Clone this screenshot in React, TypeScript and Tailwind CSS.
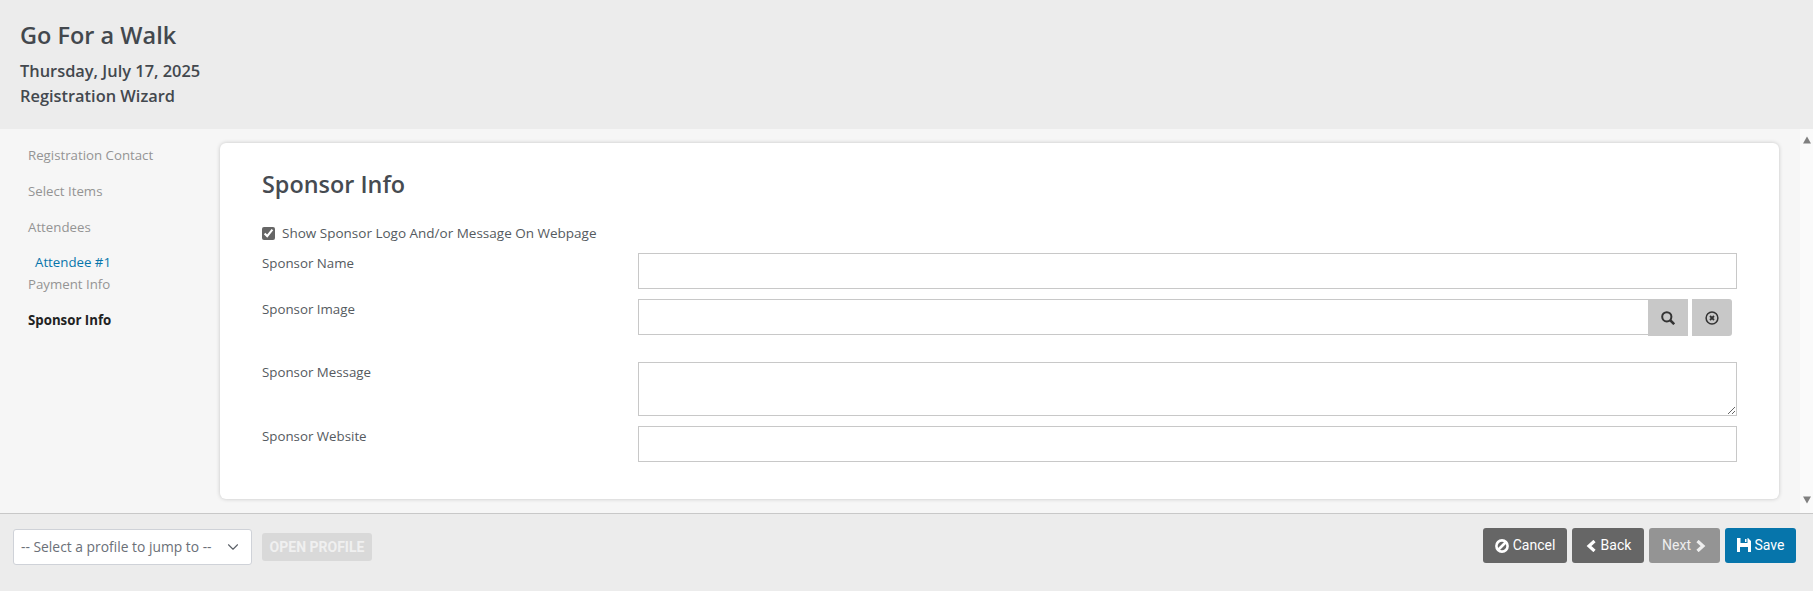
import React from 'react';
import { ChevronDown } from 'lucide-react';

const steps = [
  { label: 'Registration Contact', className: 'mt-[16px] text-[#949494]' },
  { label: 'Select Items', className: 'mt-[16px] text-[#949494]' },
  { label: 'Attendees', className: 'mt-[16px] text-[#949494]' },
  { label: 'Attendee #1', className: 'mt-[15px] ml-[7px] text-[#0675ab]' },
  { label: 'Payment Info', className: 'mt-[2px] text-[#949494]' },
  { label: 'Sponsor Info', className: 'mt-[16px] font-bold text-[#222222]' },
];

const inputClass = 'h-[36px] w-full border border-[#c8c8c8] bg-white outline-none';

const FormRow: React.FC<{ label: string; children: React.ReactNode }> = ({ label, children }) => (
  <div className="flex items-start">
    <label className="w-[376px] shrink-0 text-[13.3px] leading-[20px] text-[#555a60]">{label}</label>
    <div className="flex-1">{children}</div>
  </div>
);

const FooterButton: React.FC<{ className: string; children: React.ReactNode }> = ({ className, children }) => (
  <button className={`flex h-[35px] items-center justify-center rounded-[3px] text-[14px] ${className}`}>
    {children}
  </button>
);

// font-awesome 4 style glyphs, the icon packages only carry the newer cuts
const BanIcon = () => (
  <svg width="14" height="14" viewBox="0 0 14 14" fill="none" stroke="currentColor">
    <circle cx="7" cy="7" r="5.6" strokeWidth="2.6" />
    <path d="M11 3 3 11" strokeWidth="2.6" />
  </svg>
);

const ChevronLeftIcon = () => (
  <svg width="11" height="12" viewBox="0 0 11 12" fill="none" stroke="currentColor" strokeWidth="3.2">
    <path d="M9.5 1 4 6l5.5 5" />
  </svg>
);

const ChevronRightIcon = () => (
  <svg width="11" height="12" viewBox="0 0 11 12" fill="none" stroke="currentColor" strokeWidth="3.2">
    <path d="M1.5 1 7 6l-5.5 5" />
  </svg>
);

const SaveIcon = () => (
  <svg width="14" height="14" viewBox="0 0 14 14" fill="currentColor" className="-mt-[1px]">
    <path fillRule="evenodd" d="M0 0H11L14 3V14H0ZM3.5 0V5H10.5V0ZM8 1H9.5V4H8ZM3 9V14H11V9Z" />
  </svg>
);

const SearchIcon = () => (
  <svg width="14" height="14" viewBox="0 0 14 14" fill="none" stroke="currentColor">
    <circle cx="5.8" cy="5.8" r="4.6" strokeWidth="2" />
    <path d="M9 9 13.2 13.2" strokeWidth="2.5" />
  </svg>
);

const TimesCircleIcon = () => (
  <svg width="14" height="14" viewBox="0 0 14 14" fill="none" stroke="currentColor">
    <circle cx="7" cy="7" r="5.9" strokeWidth="1.5" />
    <path d="M5 5 9 9M9 5 5 9" strokeWidth="1.8" />
  </svg>
);

export default function App() {
  return (
    <div className="flex h-[591px] flex-col overflow-hidden bg-[#ececec] font-['Open_Sans',sans-serif]">
      {/* Header */}
      <div className="h-[129px] shrink-0 bg-[#ececec] pl-[20px] pt-[19px] text-[#43484e]">
        <h1 className="text-[23.5px] leading-[32px] font-semibold">Go For a Walk</h1>
        <div className="mt-[7px] text-[16.4px] leading-[25px] font-semibold">Thursday, July 17, 2025</div>
        <div className="text-[16.4px] leading-[25px] font-semibold">Registration Wizard</div>
      </div>

      {/* Main */}
      <div className="flex h-[384px] shrink-0 bg-[#f6f6f6]">
        <nav className="flex w-[220px] shrink-0 flex-col pl-[28px] text-[13.25px] leading-[20px]">
          {steps.map((step) => (
            <div key={step.label} className={step.className}>
              {step.label}
            </div>
          ))}
        </nav>

        <div className="mt-[14px] h-[356px] w-[1559px] shrink-0 rounded-[6px] bg-white px-[42px] pt-[25px] shadow-[0_0_4px_rgba(0,0,0,0.2)]">
          <h2 className="text-[23.4px] leading-[32px] font-semibold text-[#464b51]">Sponsor Info</h2>
          <label className="mt-[23px] flex h-[20px] items-center gap-[7px] text-[13.5px] text-[#555a60]">
            <input type="checkbox" defaultChecked className="m-0 h-[13px] w-[13px] accent-[#666666]" />
            Show Sponsor Logo And/or Message On Webpage
          </label>

          <div className="mt-[10px] flex flex-col">
            <FormRow label="Sponsor Name">
              <input className={inputClass} />
            </FormRow>
            <div className="mt-[10px]">
              <FormRow label="Sponsor Image">
                <div className="flex w-[1094px] items-start">
                  <input className="h-[36px] flex-1 border border-r-0 border-[#c8c8c8] bg-white outline-none" />
                  <button className="flex h-[37px] w-[40px] items-center justify-center bg-[#c8c8c8] text-[#333333]">
                    <SearchIcon />
                  </button>
                  <button className="ml-[4px] flex h-[37px] w-[40px] items-center justify-center rounded-r-[3px] bg-[#c8c8c8] text-[#333333]">
                    <TimesCircleIcon />
                  </button>
                </div>
              </FormRow>
            </div>
            <div className="mt-[26px]">
              <FormRow label="Sponsor Message">
                <textarea className="block h-[54px] w-full border border-[#c8c8c8] bg-white outline-none" />
              </FormRow>
            </div>
            <div className="mt-[10px]">
              <FormRow label="Sponsor Website">
                <input className={inputClass} />
              </FormRow>
            </div>
          </div>
        </div>

        {/* Scrollbar */}
        <div className="ml-[21px] flex w-[13px] shrink-0 flex-col items-center justify-between bg-[#fafafa] pb-[9px] pt-[7px]">
          <svg width="8" height="8" viewBox="0 0 8 8" fill="#808080"><path d="M4 0.5 8 7.5H0z" /></svg>
          <svg width="8" height="8" viewBox="0 0 8 8" fill="#808080"><path d="M4 7.5 0 0.5H8z" /></svg>
        </div>
      </div>

      {/* Footer */}
      <div className="flex flex-1 items-start justify-between border-t border-[#c8c8c8] bg-[#ececec] pl-[13px] pr-[17px] pt-[14px]">
        <div className="mt-[1px] flex items-center">
          <div className="flex h-[36px] w-[239px] items-center justify-between rounded-[3px] border border-[#cfd2d8] bg-white pl-[7px] pr-[9px] text-[13.85px] text-[#6b7078]">
            <span>-- Select a profile to jump to --</span>
            <ChevronDown className="h-[18px] w-[18px] text-[#5c6168]" strokeWidth={1.5} />
          </div>
          <button className="ml-[10px] h-[28px] w-[110px] rounded-[3px] bg-[#d9d9d9] font-['Roboto',sans-serif] text-[14px] font-bold text-[#f0f0f0]">
            OPEN PROFILE
          </button>
        </div>

        <div className="flex items-center gap-[5px] font-['Roboto',sans-serif]">
          <FooterButton className="w-[84px] gap-[4px] bg-[#666666] text-white">
            <BanIcon />
            Cancel
          </FooterButton>
          <FooterButton className="w-[72px] gap-[5px] bg-[#666666] text-white">
            <ChevronLeftIcon />
            Back
          </FooterButton>
          <FooterButton className="w-[71px] gap-[5px] bg-[#949494] text-[#eeeeee]">
            Next
            <ChevronRightIcon />
          </FooterButton>
          <FooterButton className="w-[71px] gap-[4px] bg-[#0675ab] text-white">
            <SaveIcon />
            Save
          </FooterButton>
        </div>
      </div>
    </div>
  );
}
